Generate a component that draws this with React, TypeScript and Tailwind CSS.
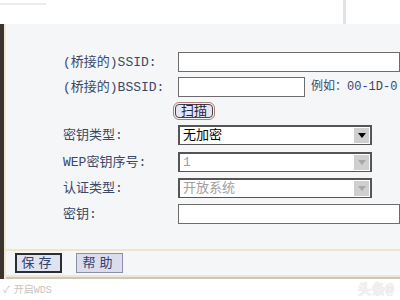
import React from "react";

const font = { fontFamily: '"Liberation Mono", "Noto Sans CJK SC", monospace' };

function Label({ children }: { children: React.ReactNode }) {
  return (
    <div className="w-[115px] shrink-0 text-[13px] leading-none text-[#3a4868]">{children}</div>
  );
}

function Select({ value, disabled }: { value: string; disabled?: boolean }) {
  return (
    <div className="flex h-[20px] w-[194px] items-center border-t-2 border-l-2 border-r-2 border-b border-[#555] bg-white">
      <span className={`flex-1 pl-[3px] text-[13px] leading-none ${disabled ? "text-[#a0a0a0]" : "text-black"}`}>
        {value}
      </span>
      <div className="mr-[1px] flex h-[15px] w-[15px] items-center justify-center bg-[#cfcfcf]">
        <div
          className={`h-0 w-0 border-x-[4px] border-t-[5px] border-x-transparent ${
            disabled ? "border-t-[#a8a8a8]" : "border-t-black"
          }`}
        />
      </div>
    </div>
  );
}

export default function App() {
  return (
    <div className="relative h-[300px] w-[400px] overflow-hidden bg-white" style={font}>
      {/* faint scraps above the panel */}
      <div className="flex h-[24px]">
        <div className="mt-[3px] h-[2px] w-[46px] bg-[#ececec]" />
        <div className="ml-[297px] h-[25px] w-[3px] bg-[#e4e4e4]" />
      </div>

      <div className="flex h-[255px] border-l-4 border-[#3b332d]">
        <div className="flex flex-1 flex-col border-l-2 border-[#f4e7d2] bg-[#f5f6f8]">
          <div className="flex h-[225px] flex-col pl-[57px] pt-[28px]">
            <div className="flex h-[20px] items-center">
              <Label>(桥接的)SSID:</Label>
              <div className="h-[20px] flex-1 border border-[#6c6c6c] bg-white" />
            </div>
            <div className="mt-[5px] flex h-[20px] items-center">
              <Label>(桥接的)BSSID:</Label>
              <div className="h-[20px] w-[127px] shrink-0 border border-[#6c6c6c] bg-white" />
              <span className="ml-[6px] text-[12px] leading-none whitespace-nowrap text-[#3a4868]">例如：00-1D-0</span>
            </div>
            <div className="mt-[5px] flex h-[18px] items-center">
              <div className="w-[110px] shrink-0" />
              <div className="rounded-[6px] border border-[#b07a7a] p-[1px]">
                <div className="flex h-[14px] w-[38px] items-center justify-center rounded-[4px] border border-[#444] bg-[#e6e6f2] text-[13px] leading-none text-[#1e2540]">
                  扫描
                </div>
              </div>
            </div>
            <div className="mt-[5px] flex h-[20px] items-center">
              <Label>密钥类型:</Label>
              <Select value="无加密" />
            </div>
            <div className="mt-[7px] flex h-[20px] items-center">
              <Label>WEP密钥序号:</Label>
              <Select value="1" disabled />
            </div>
            <div className="mt-[6px] flex h-[20px] items-center">
              <Label>认证类型:</Label>
              <Select value="开放系统" disabled />
            </div>
            <div className="mt-[6px] flex h-[20px] items-center">
              <Label>密钥:</Label>
              <div className="h-[20px] flex-1 border border-[#6c6c6c] bg-white" />
            </div>
          </div>

          <div className="h-[2px] bg-[#f2e3cc]" />

          <div className="flex h-[24px] items-center gap-[14px] pl-[9px]">
            <div className="flex h-[20px] w-[47px] items-center justify-center border-2 border-[#2c2c34] bg-[#dfe2f0] text-[13px] leading-none tracking-[4px] text-[#34406a]">
              保存
            </div>
            <div className="flex h-[20px] w-[47px] items-center justify-center border border-[#8a90a8] bg-[#d9ddee] text-[13px] leading-none tracking-[4px] text-[#34406a]">
              帮助
            </div>
          </div>

          <div className="h-[2px] bg-[#f0e6d2]" />
          <div className="h-[2px] bg-[#c9cabd]" />
        </div>
      </div>

      <div className="flex items-center gap-[4px] pl-[3px] pt-[7px] text-[10px] leading-none text-[#c4c4c4]">
        <span>✓</span>
        <span>开启WDS</span>
      </div>

      <div className="absolute right-[6px] bottom-[3px] text-[14px] leading-none font-bold text-[#f2f2f2] [text-shadow:0_0_1px_#cfcfcf]">
        头条@
      </div>
    </div>
  );
}
